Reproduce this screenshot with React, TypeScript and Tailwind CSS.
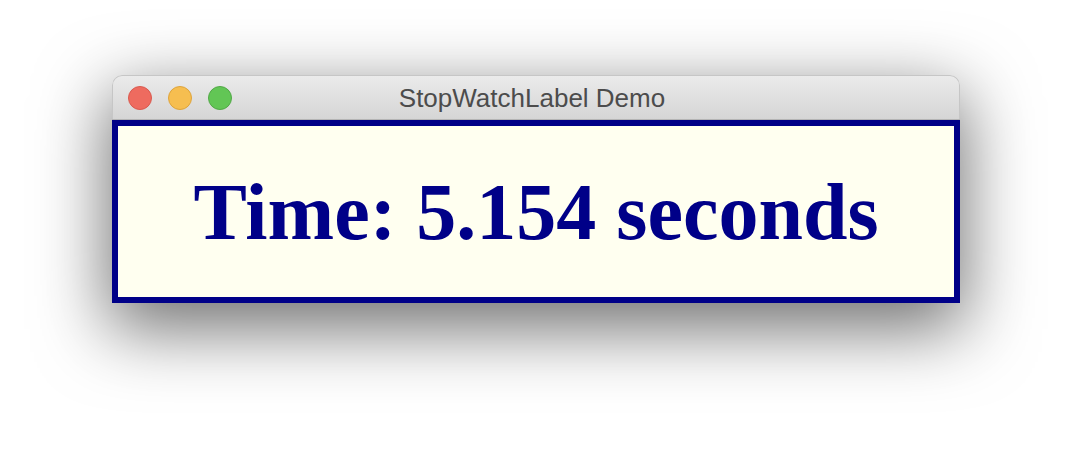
export default function App() {
  return (
    <div className="h-[450px] w-[1072px] overflow-hidden bg-white pl-[112px] pt-[75px]">
      <div className="w-[848px] rounded-t-[10px] shadow-[0_22px_70px_4px_rgba(0,0,0,0.56)]">
        {/* title bar */}
        <div className="relative flex h-[44px] items-center rounded-t-[10px] border border-b-0 border-[#c6c6c6] bg-gradient-to-b from-[#ebebeb] to-[#d5d5d5]">
          <div className="flex items-center gap-4 pl-[15px]">
            <span className="h-6 w-6 rounded-full border border-[#d95a4f] bg-[#ee6b5f]" />
            <span className="h-6 w-6 rounded-full border border-[#dea43c] bg-[#f6be50]" />
            <span className="h-6 w-6 rounded-full border border-[#52a847] bg-[#62c655]" />
          </div>
          <div className="absolute inset-0 flex items-center justify-center pr-2 pt-px font-['Liberation_Sans',sans-serif] text-[26px] text-[#4c4c4c]">
            StopWatchLabel Demo
          </div>
        </div>
        <div className="h-px bg-[#b4b4b4]" />
        {/* content */}
        <div className="flex h-[183px] items-center justify-center border-[6px] border-[#000088] bg-[#fffff0]">
          <span className="font-['Liberation_Serif',serif] text-[80px] font-bold leading-none text-[#000088]">
            Time: 5.154 seconds
          </span>
        </div>
      </div>
    </div>
  );
}
